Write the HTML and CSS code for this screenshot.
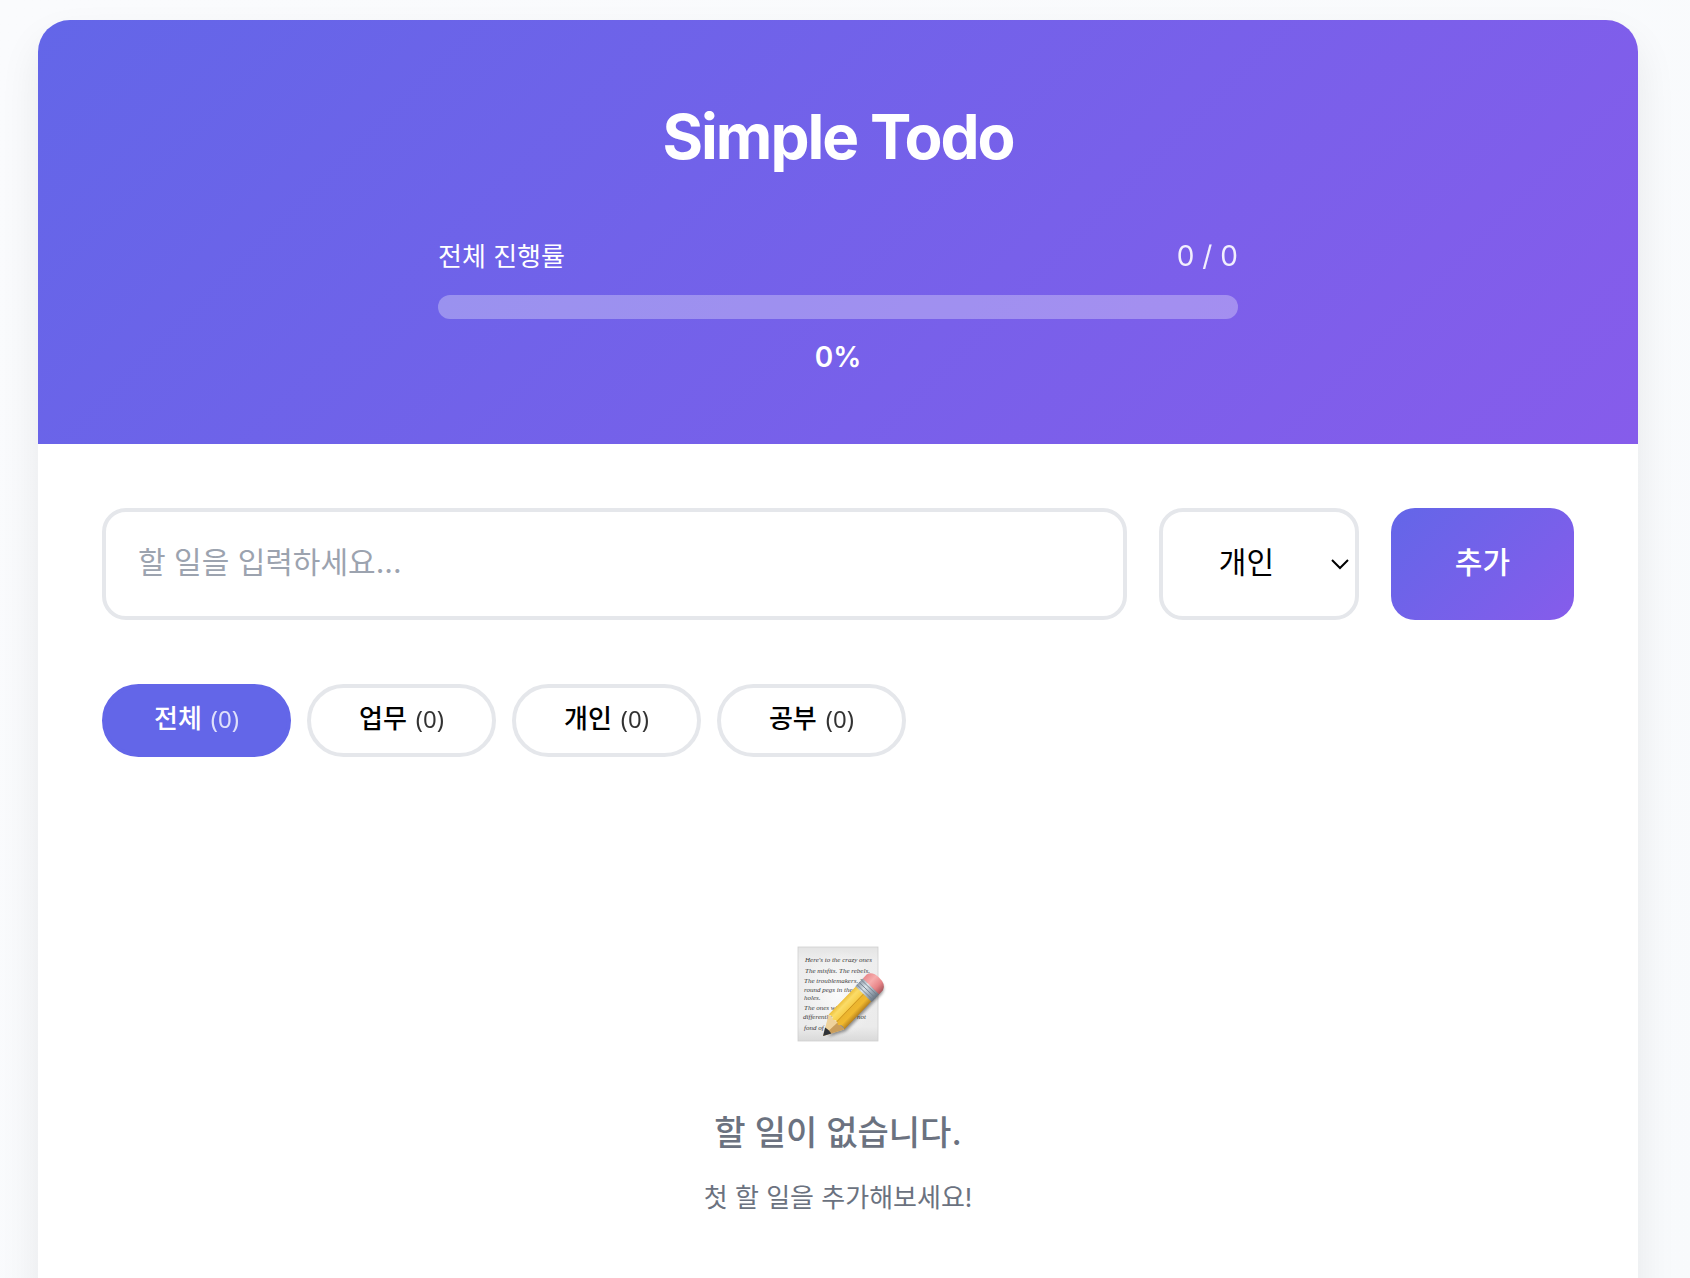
FILE: index.html
```html
<!DOCTYPE html>
<html lang="ko">
<head>
<meta charset="utf-8">
<meta name="viewport" content="width=device-width, initial-scale=1">
<title>Simple Todo</title>
<link rel="stylesheet" href="styles.css">
</head>
<body>
<div class="app">
  <header class="header">
    <h1 class="title">Simple Todo</h1>
    <section class="progress" aria-label="전체 진행률">
      <div class="progress-info">
        <span>전체 진행률</span>
        <span class="progress-count">0 / 0</span>
      </div>
      <div class="progress-bar"><div class="progress-fill" style="width: 0%"></div></div>
      <div class="progress-percent">0%</div>
    </section>
  </header>
  <main class="content">
    <form class="add-form">
      <input class="field todo-input" type="text" placeholder="할 일을 입력하세요..." aria-label="할 일">
      <select class="field category" aria-label="카테고리">
        <option>업무</option>
        <option selected>개인</option>
        <option>공부</option>
      </select>
      <button class="add-button" type="submit">추가</button>
    </form>
    <nav class="filters" aria-label="필터">
      <button class="filter filter-active" type="button">전체<span class="filter-count">(0)</span></button>
      <button class="filter" type="button">업무<span class="filter-count">(0)</span></button>
      <button class="filter" type="button">개인<span class="filter-count">(0)</span></button>
      <button class="filter" type="button">공부<span class="filter-count">(0)</span></button>
    </nav>
    <section class="empty">
      <svg class="empty-icon" viewBox="0 0 96 100" aria-hidden="true">
        <defs>
          <linearGradient id="paper" x1="0" y1="0" x2="0" y2="1">
            <stop offset="0" stop-color="#e4e4e4"/>
            <stop offset=".15" stop-color="#eeeeee"/>
            <stop offset=".85" stop-color="#ebebeb"/>
            <stop offset="1" stop-color="#d9d9d9"/>
          </linearGradient>
          <radialGradient id="glow">
            <stop offset="0" stop-color="#fafafa"/>
            <stop offset="1" stop-color="#fafafa" stop-opacity="0"/>
          </radialGradient>
          <linearGradient id="wood" x1="0" y1="0" x2="0" y2="1">
            <stop offset="0" stop-color="#eebf3a"/>
            <stop offset=".2" stop-color="#fbdc68"/>
            <stop offset=".45" stop-color="#f8cf4c"/>
            <stop offset=".5" stop-color="#eab42f"/>
            <stop offset=".75" stop-color="#f0b92f"/>
            <stop offset="1" stop-color="#b9821c"/>
          </linearGradient>
          <linearGradient id="metal" x1="0" y1="0" x2="0" y2="1">
            <stop offset="0" stop-color="#8d9ba9"/>
            <stop offset=".35" stop-color="#dce4ea"/>
            <stop offset=".65" stop-color="#a3b0bd"/>
            <stop offset="1" stop-color="#68737f"/>
          </linearGradient>
          <linearGradient id="rubber" x1="0" y1="0" x2="0" y2="1">
            <stop offset="0" stop-color="#e98a8c"/>
            <stop offset=".35" stop-color="#f7adad"/>
            <stop offset=".7" stop-color="#e88588"/>
            <stop offset="1" stop-color="#a9575c"/>
          </linearGradient>
          <filter id="soft" x="-20%" y="-50%" width="140%" height="200%"><feGaussianBlur stdDeviation="1.6"/></filter>
        </defs>
        <rect x="8" y="3" width="80" height="94" fill="url(#paper)" stroke="#cfcfcf" stroke-width=".8"/>
        <ellipse cx="48" cy="50" rx="38" ry="44" fill="url(#glow)"/>
        <g class="note">
          <text x="15" y="18">Here's to the crazy ones</text>
          <text x="15" y="29">The misfits. The rebels.</text>
          <text x="14" y="39">The troublemakers. The</text>
          <text x="14" y="48">round pegs in the</text>
          <text x="14" y="56">holes.</text>
          <text x="14" y="66">The ones who see</text>
          <text x="13" y="75">differently. They're not</text>
          <text x="14" y="86">fond of</text>
        </g>
        <g transform="translate(33 92) rotate(-46) scale(1.08)">
          <path d="M3 4 18 12H66Q73 11 73 3L60-2Z" fill="#000" opacity=".42" filter="url(#soft)"/>
          <path d="M0 0 18-10V10Z" fill="#efd29b"/>
          <path d="M0 0 18 1V10Z" fill="#c99d5c"/>
          <path d="M0 0 7-4Q8 0 7 4Z" fill="#303338"/>
          <path d="M18-10H55V10H18Q21 6 17 3 20-1 17-4 20-6 18-10Z" fill="url(#wood)"/>
          <path d="M18 0H55" stroke="#c8901e" stroke-width=".7"/>
          <rect x="54" y="-10.500" width="10" height="21" fill="url(#metal)"/>
          <path d="M56-10.500V10.500M59-10.500V10.500M62-10.500V10.500" stroke="#73808d" stroke-width=".8"/>
          <path d="M64-10.500H69Q75-9 75 0T69 10.500H64Z" fill="url(#rubber)"/>
        </g>
      </svg>
      <p class="empty-title">할 일이 없습니다.</p>
      <p class="empty-text">첫 할 일을 추가해보세요!</p>
    </section>
  </main>
</div>
</body>
</html>
```
FILE: styles.css
```css
* {
  box-sizing: border-box;
  margin: 0;
}

body {
  padding: 20px 52px 0 38px;
  background: linear-gradient(135deg, #fafbfd, #f8fafc);
  color: #000;
  font-family: Inter, "Noto Sans CJK KR", sans-serif;
  font-size: 26px;
  line-height: 45px;
}

button,
input,
select {
  font: inherit;
  color: inherit;
}

.app {
  max-width: 1600px;
  margin: 0 auto;
  overflow: hidden;
  border-radius: 32px;
  background: #fff;
  box-shadow: 0 20px 40px rgba(0, 0, 0, 0.08);
}

.header {
  padding: 64px;
  background: linear-gradient(135deg, #6366e8, #865ceb);
  color: #fff;
}

.title {
  margin-bottom: 44px;
  font-size: 62px;
  font-weight: 700;
  line-height: 106px;
  letter-spacing: -2px;
  text-align: center;
}

.progress {
  max-width: 800px;
  margin: 0 auto;
}

.progress-info {
  display: flex;
  justify-content: space-between;
  margin-bottom: 16px;
}

.progress-count {
  font-size: 28px;
  opacity: 0.9;
}

.progress-bar {
  height: 24px;
  margin-bottom: 16px;
  overflow: hidden;
  border-radius: 12px;
  background: rgba(255, 255, 255, 0.3);
}

.progress-fill {
  height: 100%;
  background: #fff;
}

.progress-percent {
  font-size: 28px;
  font-weight: 600;
  text-align: center;
}

.content {
  padding: 64px;
}

.add-form {
  display: flex;
  gap: 32px;
  height: 112px;
  margin-bottom: 64px;
  font-size: 30px;
}

.field {
  border: 4px solid #e5e7eb;
  border-radius: 24px;
  background: #fff;
}

.todo-input {
  flex: 1;
  min-width: 0;
  padding: 0 32px 4px;
}

.todo-input::placeholder {
  color: #9ca3af;
  opacity: 1;
}

.category {
  width: 200px;
  padding: 0 56px 4px;
  appearance: none;
  background: #fff url("data:image/svg+xml,%3Csvg xmlns='http://www.w3.org/2000/svg' width='18' height='12' fill='none' stroke='%23000' stroke-width='2'%3E%3Cpath d='M1 2l8 8 8-8'/%3E%3C/svg%3E") no-repeat right 6px center;
}

.add-button {
  padding: 0 64px 4px;
  border: 0;
  border-radius: 24px;
  background: linear-gradient(135deg, #6366e8, #865ceb);
  color: #fff;
  font-weight: 500;
  white-space: nowrap;
}

.filters {
  display: flex;
  flex-wrap: wrap;
  gap: 16px;
  margin-bottom: 64px;
}

.filter {
  padding: 12px 48px 16px;
  border: 4px solid #e5e7eb;
  border-radius: 40px;
  background: #fff;
  font-weight: 500;
  line-height: 37px;
}

.filter-active {
  border-color: #6366e8;
  background: #6366e8;
  color: #fff;
}

.filter-count {
  margin-left: 9px;
  font-family: "Noto Sans", "Noto Sans CJK KR", sans-serif;
  font-size: 24px;
  font-weight: 400;
  line-height: 1;
  opacity: 0.8;
}

.empty {
  display: flex;
  flex-direction: column;
  align-items: center;
  padding: 123px 64px;
  color: #6b7280;
  text-align: center;
}

.empty-icon {
  width: 96px;
  height: 100px;
  margin-bottom: 62px;
  overflow: visible;
}

.note {
  fill: #3c3c3c;
  font-family: "Liberation Serif", serif;
  font-size: 7px;
  font-style: italic;
}

.empty-title {
  margin-bottom: 16px;
  font-size: 34px;
  font-weight: 500;
  line-height: 54px;
}

.empty-text {
  line-height: 43px;
}
```
